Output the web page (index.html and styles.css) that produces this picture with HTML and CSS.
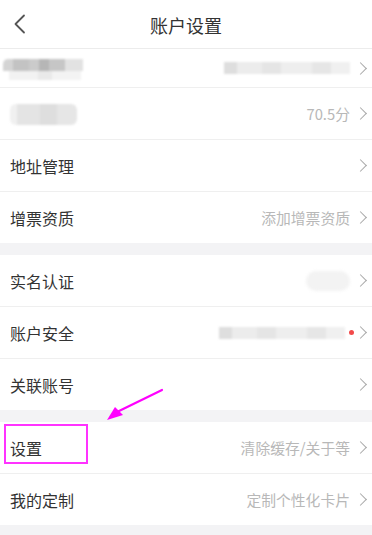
FILE: index.html
```html
<!DOCTYPE html>
<html lang="zh-CN">
<head>
  <meta charset="UTF-8" />
  <title>账户设置</title>
  <link rel="stylesheet" href="styles.css">
</head>
<body>

<div class="page">
  <div class="header">
    <svg class="back" width="14" height="20" viewBox="0 0 14 20">
      <path d="M11 1.5 L2.5 10 L11 18.5" fill="none" stroke="#555" stroke-width="1.8" stroke-linecap="round" stroke-linejoin="round"/>
    </svg>
    <div class="title">账户设置</div>
  </div>

  <div class="group">
    <div class="row short">
      <div class="blur-name">
        <div class="top"></div>
        <div class="bottom"></div>
      </div>
      <div class="value"><div class="blur-line"></div></div>
      <span class="arrow"></span>
    </div>
    <div class="row">
      <div class="blur-score"></div>
      <div class="value">70.5分</div>
      <span class="arrow"></span>
    </div>
    <div class="row">
      <div class="label">地址管理</div>
      <div class="value"></div>
      <span class="arrow"></span>
    </div>
    <div class="row">
      <div class="label">增票资质</div>
      <div class="value">添加增票资质</div>
      <span class="arrow"></span>
    </div>
  </div>

  <div class="group">
    <div class="row">
      <div class="label">实名认证</div>
      <div class="value"><div class="blur-pill"></div></div>
      <span class="arrow"></span>
    </div>
    <div class="row">
      <div class="label">账户安全</div>
      <div class="value"><div class="blur-line"></div><span class="dot"></span></div>
      <span class="arrow"></span>
    </div>
    <div class="row">
      <div class="label">关联账号</div>
      <div class="value"></div>
      <span class="arrow"></span>
    </div>
  </div>

  <div class="group">
    <div class="row">
      <div class="label">设置</div>
      <div class="value">清除缓存/关于等</div>
      <span class="arrow"></span>
    </div>
    <div class="row">
      <div class="label">我的定制</div>
      <div class="value">定制个性化卡片</div>
      <span class="arrow"></span>
    </div>
  </div>

  <!-- annotation over the screenshot -->
  <div class="mark"></div>
  <svg class="pointer" width="70" height="36" viewBox="0 0 70 36">
    <path d="M67 2 L22 24" stroke="#f0f" stroke-width="2.2" stroke-linecap="round"/>
    <path d="M12 32 L20 19 L28 27 Z" fill="#f0f"/>
  </svg>
</div>

</body>
</html>
```

FILE: styles.css
```css
* { box-sizing: border-box; }
body {
  margin: 0;
  font-family: 'Noto Sans CJK SC', 'Noto Sans', sans-serif;
  background: #f3f3f5;
  color: #333;
}
.page {
  position: relative;
  width: 372px;
  height: 535px;
  overflow: hidden;
}
.header {
  height: 49px;
  background: #fff;
  border-bottom: 1px solid #ececec;
  display: flex;
  align-items: center;
  justify-content: center;
  position: relative;
}
.back { position: absolute; left: 13px; top: 14px; }
.title { font-size: 18px; color: #333; margin-top: 2px; }

.group {
  background: #fff;
  margin-bottom: 12px;
}
.row {
  height: 52px;
  display: flex;
  align-items: center;
  padding: 0 4px 0 10px;
  border-bottom: 1px solid #efefef;
}
.row:last-child { border-bottom: none; height: 51px; }
.row.short { height: 39px; padding-left: 3px; }
.label { font-size: 16px; color: #333; }
.value {
  flex: 1;
  display: flex;
  align-items: center;
  justify-content: flex-end;
  font-size: 14.8px;
  color: #b8b8b8;
  margin-right: 6px;
}
.arrow {
  width: 9px;
  height: 9px;
  border-top: 1.4px solid #a8a8a8;
  border-right: 1.4px solid #a8a8a8;
  transform: rotate(45deg);
  margin-right: 3px;
}

/* blurred personal info */
.blur-name { width: 80px; filter: blur(1px); margin-top: 2px; }
.blur-name .top {
  height: 12px;
  border-radius: 5px 0 0 0;
  background: linear-gradient(to right, #d4d4d4 0 12%, #c3c3c3 12% 33%, #cbcbcb 33% 45%, #b6b6b6 45% 58%, #c6c6c6 58% 78%, #e2e2e2 78% 100%);
}
.blur-name .bottom {
  height: 9px;
  width: 72px;
  margin-left: 6px;
  background: linear-gradient(to right, #f2f2f2 0 40%, #e9e9e9 40% 60%, #f3f3f3 60% 100%);
}
.blur-score {
  width: 67px;
  height: 21px;
  margin-top: 1px;
  border-radius: 6px;
  filter: blur(1px);
  background: linear-gradient(to right, #f0f0f0 0 10%, #e4e4e4 10% 45%, #dedede 45% 70%, #e6e6e6 70% 100%);
}
.blur-line {
  width: 126px;
  height: 12px;
  filter: blur(1px);
  background: linear-gradient(to right, #dedede 0 10%, #ececec 10% 30%, #e5e5e5 30% 45%, #eeeeee 45% 70%, #e6e6e6 70% 85%, #f0f0f0 85% 100%);
}
.blur-pill {
  width: 44px;
  height: 20px;
  border-radius: 10px;
  filter: blur(1.5px);
  background: #f3f3f3;
}
.dot {
  width: 5px;
  height: 5px;
  border-radius: 50%;
  background: #f24a4a;
  margin-left: 4px;
  margin-right: -4px;
}

/* pink annotation */
.mark {
  position: absolute;
  left: 4px;
  top: 424px;
  width: 84px;
  height: 40px;
  border: 2px solid #f3f;
}
.pointer {
  position: absolute;
  left: 95px;
  top: 388px;
}
```
